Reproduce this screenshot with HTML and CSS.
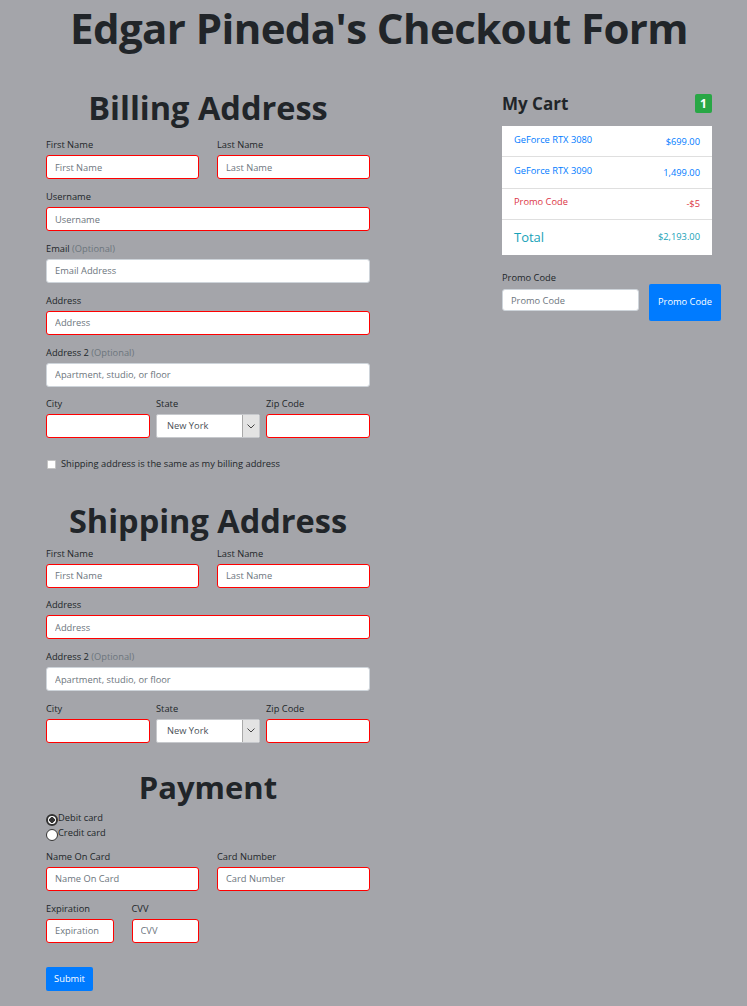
FILE: index.html
```html
<!DOCTYPE html>
<html lang="en">
<head>
<meta charset="utf-8">
<title>Checkout Form</title>
<link rel="stylesheet" href="styles.css">
</head>
<body>
<h1 class="page-title">Edgar Pineda's Checkout Form</h1>
<div class="layout">
  <form class="checkout">
    <h2 class="section-title section-title--billing">Billing Address</h2>
    <div class="grid grid-2">
      <div class="field"><label class="field-label">First Name</label><input class="input input--invalid" placeholder="First Name"></div>
      <div class="field"><label class="field-label">Last Name</label><input class="input input--invalid" placeholder="Last Name"></div>
    </div>
    <div class="field"><label class="field-label">Username</label><input class="input input--invalid" placeholder="Username"></div>
    <div class="field"><label class="field-label">Email <span class="optional">(Optional)</span></label><input class="input" placeholder="Email Address"></div>
    <div class="field"><label class="field-label">Address</label><input class="input input--invalid" placeholder="Address"></div>
    <div class="field"><label class="field-label">Address 2 <span class="optional">(Optional)</span></label><input class="input" placeholder="Apartment, studio, or floor"></div>
    <div class="grid grid-3">
      <div class="field"><label class="field-label">City</label><input class="input input--invalid"></div>
      <div class="field"><label class="field-label">State</label>
        <div class="select-wrap"><select class="select"><option>New York</option></select><span class="select-arrow"><svg width="8" height="5" viewBox="0 0 8 5"><path d="M0.5 0.5 L4 4 L7.5 0.5" fill="none" stroke="#444" stroke-width="1"/></svg></span></div>
      </div>
      <div class="field"><label class="field-label">Zip Code</label><input class="input input--invalid"></div>
    </div>
    <label class="check-row"><input type="checkbox" class="checkbox"><span>Shipping address is the same as my billing address</span></label>

    <h2 class="section-title section-title--shipping">Shipping Address</h2>
    <div class="grid grid-2">
      <div class="field"><label class="field-label">First Name</label><input class="input input--invalid" placeholder="First Name"></div>
      <div class="field"><label class="field-label">Last Name</label><input class="input input--invalid" placeholder="Last Name"></div>
    </div>
    <div class="field"><label class="field-label">Address</label><input class="input input--invalid" placeholder="Address"></div>
    <div class="field"><label class="field-label">Address 2 <span class="optional">(Optional)</span></label><input class="input" placeholder="Apartment, studio, or floor"></div>
    <div class="grid grid-3">
      <div class="field"><label class="field-label">City</label><input class="input input--invalid"></div>
      <div class="field"><label class="field-label">State</label>
        <div class="select-wrap"><select class="select"><option>New York</option></select><span class="select-arrow"><svg width="8" height="5" viewBox="0 0 8 5"><path d="M0.5 0.5 L4 4 L7.5 0.5" fill="none" stroke="#444" stroke-width="1"/></svg></span></div>
      </div>
      <div class="field"><label class="field-label">Zip Code</label><input class="input input--invalid"></div>
    </div>

    <h2 class="section-title section-title--payment">Payment</h2>
    <div class="radios">
      <label class="radio-row"><input type="radio" name="pay" class="radio" checked><span>Debit card</span></label>
      <label class="radio-row"><input type="radio" name="pay" class="radio"><span>Credit card</span></label>
    </div>
    <div class="grid grid-2">
      <div class="field"><label class="field-label">Name On Card</label><input class="input input--invalid" placeholder="Name On Card"></div>
      <div class="field"><label class="field-label">Card Number</label><input class="input input--invalid" placeholder="Card Number"></div>
    </div>
    <div class="grid grid-4">
      <div class="field"><label class="field-label">Expiration</label><input class="input input--invalid" placeholder="Expiration"></div>
      <div class="field"><label class="field-label">CVV</label><input class="input input--invalid" placeholder="CVV"></div>
    </div>
    <button type="button" class="btn btn-submit">Submit</button>
  </form>

  <aside class="cart">
    <div class="cart-header">
      <h4 class="cart-title">My Cart</h4>
      <span class="badge">1</span>
    </div>
    <ul class="cart-list">
      <li class="cart-item"><span class="cart-name">GeForce RTX 3080</span><span class="cart-price">$699.00</span></li>
      <li class="cart-item"><span class="cart-name">GeForce RTX 3090</span><span class="cart-price">1,499.00</span></li>
      <li class="cart-item cart-item--promo"><span class="cart-name">Promo Code</span><span class="cart-price">-$5</span></li>
      <li class="cart-item cart-item--total"><span class="cart-name">Total</span><span class="cart-price">$2,193.00</span></li>
    </ul>
    <div class="promo">
      <div class="promo-field">
        <label class="field-label promo-label">Promo Code</label>
        <input class="input input--promo" placeholder="Promo Code">
      </div>
      <button type="button" class="btn btn-promo">Promo Code</button>
    </div>
  </aside>
</div>
</body>
</html>
```
FILE: styles.css
```css
* { box-sizing: border-box; }

body {
  margin: 0;
  background: #a4a5aa;
  color: #212529;
  font-family: "Open Sans", "Noto Sans", Arial, sans-serif;
  font-size: 9.3px;
  line-height: 14px;
}

.page-title {
  margin: 2px 0 0;
  padding-left: 11px;
  font-size: 42px;
  line-height: 52px;
  font-weight: 700;
  letter-spacing: -0.6px;
  text-align: center;
}

.layout {
  display: flex;
  align-items: flex-start;
  padding: 0 0 16px 46px;
}

.checkout {
  width: 324px;
  flex: none;
}

.section-title {
  margin: 0;
  font-size: 32.5px;
  line-height: 40px;
  font-weight: 700;
  text-align: center;
}
.section-title--billing { margin-top: 34px; margin-bottom: 10.4px; }
.section-title--shipping { margin-top: 29.9px; margin-bottom: 5.5px; }
.section-title--payment { margin-top: 14px; font-size: 31px; line-height: 38px; }

.grid { display: grid; }
.grid-2 { grid-template-columns: 1fr 1fr; column-gap: 18px; }
.grid-3 { grid-template-columns: 1fr 1fr 1fr; column-gap: 6px; }
.grid-4 { grid-template-columns: repeat(4, 1fr); column-gap: 18px; }

.field { margin-bottom: 10.8px; }

.field-label {
  display: block;
  margin-bottom: 3px;
  line-height: 14px;
}

.optional { color: #6c757d; }

.input {
  display: block;
  width: 100%;
  height: 24px;
  margin: 0;
  padding: 0 8px;
  border: 1px solid #ced4da;
  border-radius: 3px;
  background: #fff;
  font: inherit;
  color: #495057;
  outline: none;
}
.input::placeholder { color: #6c757d; opacity: 1; }
.input--invalid { border-color: #ff0000; }

.select-wrap { position: relative; height: 24px; }
.select {
  appearance: none;
  -webkit-appearance: none;
  display: block;
  width: 100%;
  height: 24px;
  margin: 0;
  padding: 0 0 0 10px;
  border: 1px solid #c6c8cc;
  border-radius: 2px;
  background: #fff;
  font: inherit;
  color: #495057;
}
.select-arrow {
  position: absolute;
  top: 1px;
  right: 1px;
  bottom: 1px;
  width: 17px;
  display: flex;
  align-items: center;
  justify-content: center;
  background: #e3e3e3;
  border-left: 1px solid #a9a9a9;
  border-radius: 0 1px 1px 0;
  pointer-events: none;
}

.check-row {
  display: flex;
  align-items: center;
  gap: 5px;
  margin-top: 8px;
  line-height: 14px;
}
.checkbox {
  appearance: none;
  -webkit-appearance: none;
  width: 9px;
  height: 9px;
  margin: 0 0 0 1px;
  background: #fff;
  border: 1px solid #c4c4c4;
  border-radius: 1px;
  flex: none;
}

.radios { margin-top: 4.4px; margin-bottom: 9.8px; }
.radio-row {
  display: flex;
  align-items: flex-start;
  line-height: 15px;
  height: 15px;
}
.radio {
  appearance: none;
  -webkit-appearance: none;
  width: 12px;
  height: 12px;
  margin: 3.5px 0 0;
  border: 1px solid #333;
  border-radius: 50%;
  background: #fff;
  flex: none;
}
.radio:checked {
  border: 2px solid #333;
  background: radial-gradient(circle, #333 0 2.6px, #fff 3px);
}

.btn {
  border: none;
  font: inherit;
  color: #fff;
  background: #007bff;
  border-radius: 2px;
  cursor: pointer;
}
.btn-submit {
  display: block;
  margin-top: 13.1px;
  width: 47px;
  height: 24px;
  padding: 0;
}

.cart {
  width: 210px;
  margin-left: 132px;
  padding-top: 39.5px;
  flex: none;
}
.cart-header {
  display: flex;
  align-items: center;
  justify-content: space-between;
  height: 20px;
}
.cart-title {
  margin: 0;
  font-size: 17px;
  line-height: 20px;
  font-weight: 700;
}
.badge {
  width: 17px;
  height: 19px;
  line-height: 19px;
  text-align: center;
  background: #28a745;
  color: #fff;
  font-weight: 700;
  font-size: 12px;
  border-radius: 2px;
}

.cart-list {
  list-style: none;
  margin: 12.5px 0 0;
  padding: 0;
  background: #fff;
}
.cart-item {
  display: flex;
  justify-content: space-between;
  align-items: flex-start;
  height: 31.3px;
  padding: 6.5px 12px 0;
  border-bottom: 1px solid #dfdfdf;
  color: #007bff;
}
.cart-price { margin-top: 2px; }
.cart-item--promo { color: #dc3545; }
.cart-item--total {
  height: 35.1px;
  align-items: center;
  padding: 0 12px 1px;
  border-bottom: none;
  color: #17a2b8;
}
.cart-item--total .cart-name { font-size: 13px; line-height: 18px; }
.cart-item--total .cart-price { margin-top: 0; }

.promo {
  display: flex;
  align-items: flex-start;
  margin-top: 15.8px;
}
.promo-field { width: 137px; flex: none; }
.promo-label { margin-bottom: 4.7px; }
.input--promo { height: 22px; }
.btn-promo {
  margin-top: 13.2px;
  margin-left: 10px;
  width: 72px;
  height: 37px;
  padding: 0;
  flex: none;
}
```
